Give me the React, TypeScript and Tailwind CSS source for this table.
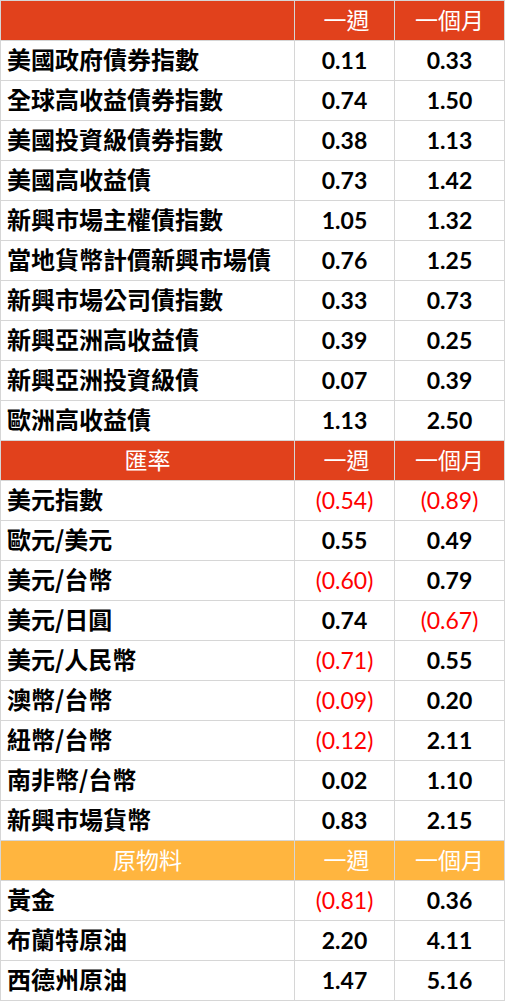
import React from 'react';

type Row = { name: string; week: string; month: string };

const bonds: Row[] = [
  { name: '美國政府債券指數', week: '0.11', month: '0.33' },
  { name: '全球高收益債券指數', week: '0.74', month: '1.50' },
  { name: '美國投資級債券指數', week: '0.38', month: '1.13' },
  { name: '美國高收益債', week: '0.73', month: '1.42' },
  { name: '新興市場主權債指數', week: '1.05', month: '1.32' },
  { name: '當地貨幣計價新興市場債', week: '0.76', month: '1.25' },
  { name: '新興市場公司債指數', week: '0.33', month: '0.73' },
  { name: '新興亞洲高收益債', week: '0.39', month: '0.25' },
  { name: '新興亞洲投資級債', week: '0.07', month: '0.39' },
  { name: '歐洲高收益債', week: '1.13', month: '2.50' },
];

const fx: Row[] = [
  { name: '美元指數', week: '(0.54)', month: '(0.89)' },
  { name: '歐元/美元', week: '0.55', month: '0.49' },
  { name: '美元/台幣', week: '(0.60)', month: '0.79' },
  { name: '美元/日圓', week: '0.74', month: '(0.67)' },
  { name: '美元/人民幣', week: '(0.71)', month: '0.55' },
  { name: '澳幣/台幣', week: '(0.09)', month: '0.20' },
  { name: '紐幣/台幣', week: '(0.12)', month: '2.11' },
  { name: '南非幣/台幣', week: '0.02', month: '1.10' },
  { name: '新興市場貨幣', week: '0.83', month: '2.15' },
];

const commodities: Row[] = [
  { name: '黃金', week: '(0.81)', month: '0.36' },
  { name: '布蘭特原油', week: '2.20', month: '4.11' },
  { name: '西德州原油', week: '1.47', month: '5.16' },
];

const cjk = "font-['Noto_Sans_CJK_TC','Noto_Sans_CJK_SC',sans-serif]";

const Header = ({ title, color }: { title: string; color: string }) => (
  <>
    <div className={`${color} ${cjk} flex h-[39px] items-center justify-center pb-[3px] text-[23px] text-white`}>
      {title}
    </div>
    <div className={`${color} ${cjk} flex h-[39px] items-center justify-center pb-[3px] pl-1 text-[23px] text-white`}>
      一週
    </div>
    <div className={`${color} ${cjk} flex h-[39px] items-center justify-center pb-[3px] text-[23px] text-white`}>
      一個月
    </div>
  </>
);

const Value = ({ v }: { v: string }) => {
  const neg = v.startsWith('(');
  return (
    <div
      className={`flex h-[39px] items-center justify-center bg-white font-['Lato',sans-serif] text-[23px] ${
        neg ? 'font-normal text-[#ff0000]' : 'font-bold text-black'
      }`}
    >
      {v}
    </div>
  );
};

const Rows = ({ rows }: { rows: Row[] }) => (
  <>
    {rows.map((r) => (
      <React.Fragment key={r.name}>
        <div className={`flex h-[39px] items-center bg-white pb-[3px] pl-[6px] ${cjk} text-[24px] font-bold text-black`}>
          {r.name}
        </div>
        <Value v={r.week} />
        <Value v={r.month} />
      </React.Fragment>
    ))}
  </>
);

const App = () => {
  return (
    <div className="min-h-screen bg-white">
      <div className="grid w-[505px] grid-cols-[293px_99px_109px] gap-px bg-[#d6d6d6] p-px leading-none">
        <Header title="" color="bg-[#e1411c]" />
        <Rows rows={bonds} />
        <Header title="匯率" color="bg-[#e1411c]" />
        <Rows rows={fx} />
        <Header title="原物料" color="bg-[#ffb53f]" />
        <Rows rows={commodities} />
      </div>
    </div>
  );
};

export default App;
